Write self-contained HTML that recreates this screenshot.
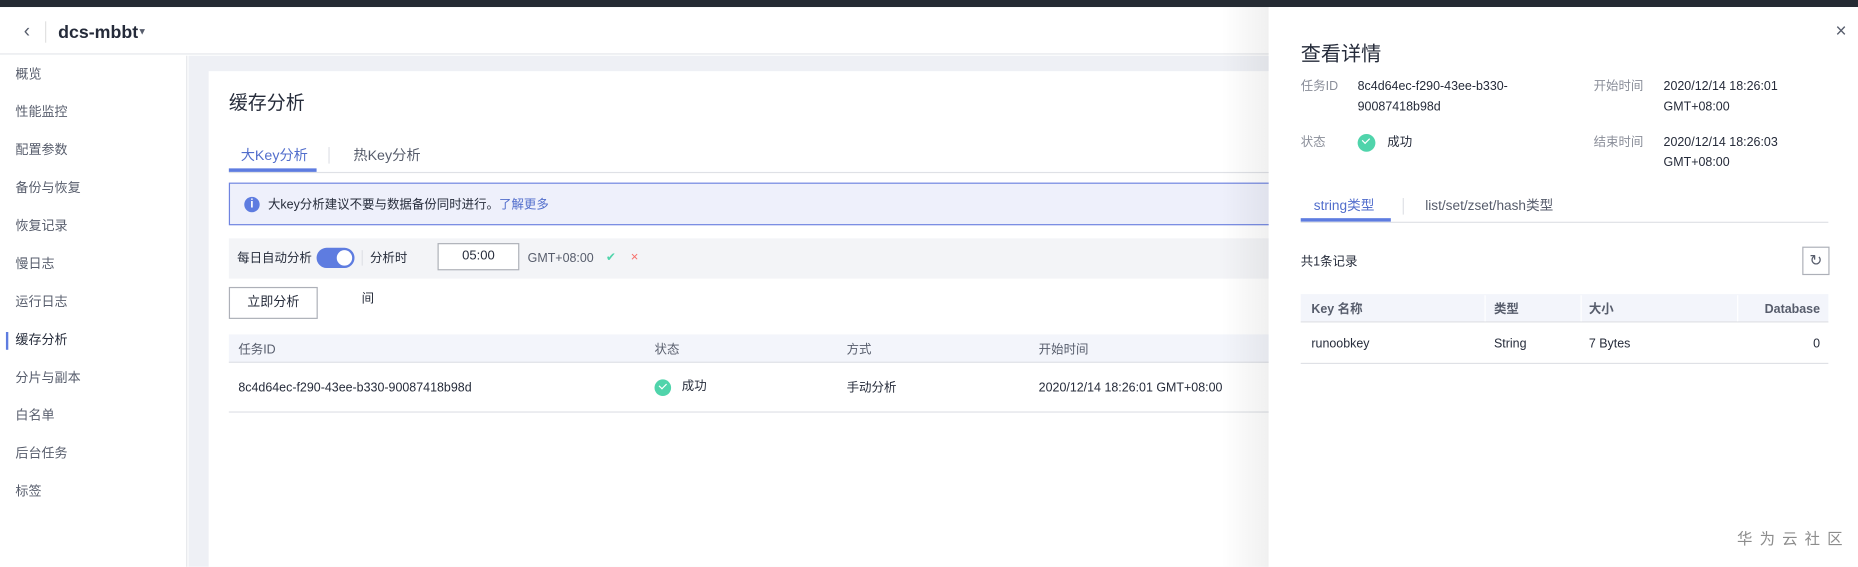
<!DOCTYPE html>
<html><head><meta charset="utf-8"><style>
*{box-sizing:border-box;margin:0;padding:0}
html,body{width:1858px;height:566px;overflow:hidden;background:#fff}
#w{position:absolute;left:0;top:0;width:1567px;height:478px;transform:scale(1.1857);transform-origin:0 0;font-family:"Liberation Sans","Noto Sans CJK SC",sans-serif;font-size:12px;color:#252b3a}
.a{position:absolute;white-space:nowrap;line-height:14px}
.side div{position:absolute;left:13px;font-size:11px;color:#575d6c;line-height:14px}
.chk{display:inline-block;width:14px;height:14px;border-radius:50%;background:#50d4ab;position:absolute}
.chk:after{content:"";position:absolute;left:4px;top:3px;width:5px;height:3px;border-left:1.5px solid #fff;border-bottom:1.5px solid #fff;transform:rotate(-45deg)}
</style></head><body><div id="w">
<div class="a" style="left:0;top:0;width:1567px;height:6px;background:#252b33"></div>
<div class="a" style="left:0;top:6px;width:1567px;height:40px;background:#fff;border-bottom:1px solid #e4e6ea"></div>
<div class="a" style="left:20px;top:18px;font-size:16px;line-height:18px;color:#575d6c">&#8249;</div>
<div class="a" style="left:38px;top:18px;width:1px;height:18px;background:#e0e0e0"></div>
<div class="a" style="left:49px;top:19px;font-size:15px;line-height:17px;font-weight:bold;color:#252b3a">dcs-mbbt</div>
<div class="a" style="left:116px;top:22px;font-size:8px;line-height:10px;color:#575d6c">&#9660;</div>
<div class="a" style="left:0;top:47px;width:158px;height:431px;background:#fff;border-right:1px solid #e4e6ea"></div>
<div class="a" style="left:159px;top:47px;width:1408px;height:431px;background:#eef0f5"></div>
<div class="side">
<div style="top:56px">概览</div><div style="top:88px">性能监控</div><div style="top:120px">配置参数</div><div style="top:152px">备份与恢复</div><div style="top:184px">恢复记录</div><div style="top:216px">慢日志</div><div style="top:248px">运行日志</div><div style="top:280px;color:#252b3a">缓存分析</div><div style="top:312px">分片与副本</div><div style="top:344px">白名单</div><div style="top:376px">后台任务</div><div style="top:408px">标签</div>
</div>
<div class="a" style="left:5px;top:280px;width:2px;height:15px;background:#5e7ce0"></div>
<div class="a" style="left:176px;top:60px;width:1000px;height:418px;background:#fff"></div>
<div class="a" style="left:193px;top:79px;font-size:16px;line-height:18px">缓存分析</div>
<div class="a" style="left:203px;top:124px;font-size:12px;color:#526ecc">大Key分析</div>
<div class="a" style="left:193px;top:142px;width:74px;height:3px;background:#5e7ce0"></div>
<div class="a" style="left:277px;top:124px;width:1px;height:14px;background:#dfe1e6"></div>
<div class="a" style="left:298px;top:124px;font-size:12px;color:#575d6c">热Key分析</div>
<div class="a" style="left:193px;top:145px;width:900px;height:1px;background:#dfe1e6"></div>
<div class="a" style="left:193px;top:154px;width:900px;height:36px;background:#eef0fb;border:1px solid #6f84e0"></div>
<div class="a" style="left:206px;top:166px;width:13px;height:13px;border-radius:50%;background:#5e7ce0;color:#fff;font-size:10px;font-weight:bold;text-align:center;line-height:13px">i</div>
<div class="a" style="left:226px;top:166px;font-size:10.5px;color:#252b3a">大key分析建议不要与数据备份同时进行。<span style="color:#526ecc">了解更多</span></div>
<div class="a" style="left:193px;top:201px;width:900px;height:34px;background:#f3f4f7"></div>
<div class="a" style="left:200px;top:211px;font-size:10.5px">每日自动分析</div>
<div class="a" style="left:267px;top:209px;width:32px;height:17px;border-radius:9px;background:#5e7ce0"><div style="position:absolute;right:2px;top:2px;width:13px;height:13px;border-radius:50%;background:#fff"></div></div>
<div class="a" style="left:305px;top:211px;width:1px;height:13px;background:#dfe1e6"></div>
<div class="a" style="left:312px;top:211px;font-size:10.5px">分析时</div>
<div class="a" style="left:369px;top:205px;width:69px;height:23px;background:#fff;border:1px solid #adb0b8;font-size:11px;text-align:center;line-height:21px">05:00</div>
<div class="a" style="left:445px;top:211px;font-size:10.5px;color:#575d6c">GMT+08:00</div>
<div class="a" style="left:511px;top:211px;font-size:10px;color:#50d4ab">&#10004;</div>
<div class="a" style="left:532px;top:210px;font-size:11px;color:#f66f6a">&#215;</div>
<div class="a" style="left:193px;top:242px;width:75px;height:27px;border:1px solid #adb0b8;font-size:11px;text-align:center;line-height:25px">立即分析</div>
<div class="a" style="left:305px;top:245px;font-size:10.5px">间</div>
<div class="a" style="left:193px;top:282px;width:900px;height:24px;background:#f3f5fb;border-bottom:1px solid #dfe1e6"></div>
<div class="a" style="left:201px;top:288px;font-size:10.5px;color:#575d6c">任务ID</div>
<div class="a" style="left:552px;top:288px;font-size:10.5px;color:#575d6c">状态</div>
<div class="a" style="left:714px;top:288px;font-size:10.5px;color:#575d6c">方式</div>
<div class="a" style="left:876px;top:288px;font-size:10.5px;color:#575d6c">开始时间</div>
<div class="a" style="left:201px;top:320px;font-size:10.5px">8c4d64ec-f290-43ee-b330-90087418b98d</div>
<span class="chk" style="left:552px;top:320px"></span>
<div class="a" style="left:575px;top:319px;font-size:10.5px">成功</div>
<div class="a" style="left:714px;top:320px;font-size:10.5px">手动分析</div>
<div class="a" style="left:876px;top:320px;font-size:10.5px">2020/12/14 18:26:01 GMT+08:00</div>
<div class="a" style="left:193px;top:347px;width:900px;height:1px;background:#dfe1e6"></div>
<div class="a" style="left:1030px;top:6px;width:40px;height:472px;background:linear-gradient(90deg,rgba(0,0,0,0),rgba(0,0,0,0.06))"></div>
<div class="a" style="left:1070px;top:6px;width:497px;height:472px;background:#fff"></div>
<div class="a" style="left:1548px;top:19px;font-size:16px;line-height:16px;color:#575d6c">&#215;</div>
<div class="a" style="left:1097px;top:36px;font-size:17px;line-height:20px">查看详情</div>
<div class="a" style="left:1097px;top:66px;font-size:10.5px;color:#8a8e99">任务ID</div>
<div class="a" style="left:1145px;top:65px;font-size:10.5px;line-height:17px">8c4d64ec-f290-43ee-b330-<br>90087418b98d</div>
<div class="a" style="left:1344px;top:66px;font-size:10.5px;color:#8a8e99">开始时间</div>
<div class="a" style="left:1403px;top:65px;font-size:10.5px;line-height:17px">2020/12/14 18:26:01<br>GMT+08:00</div>
<div class="a" style="left:1097px;top:113px;font-size:10.5px;color:#8a8e99">状态</div>
<span class="chk" style="left:1145px;top:113px;width:15px;height:15px"></span>
<div class="a" style="left:1170px;top:113px;font-size:10.5px">成功</div>
<div class="a" style="left:1344px;top:113px;font-size:10.5px;color:#8a8e99">结束时间</div>
<div class="a" style="left:1403px;top:112px;font-size:10.5px;line-height:17px">2020/12/14 18:26:03<br>GMT+08:00</div>
<div class="a" style="left:1108px;top:167px;font-size:11.5px;color:#526ecc">string类型</div>
<div class="a" style="left:1097px;top:184px;width:76px;height:3px;background:#5e7ce0"></div>
<div class="a" style="left:1183px;top:167px;width:1px;height:14px;background:#dfe1e6"></div>
<div class="a" style="left:1202px;top:167px;font-size:11.5px;color:#575d6c">list/set/zset/hash类型</div>
<div class="a" style="left:1097px;top:187px;width:445px;height:1px;background:#dfe1e6"></div>
<div class="a" style="left:1097px;top:214px;font-size:10.5px">共1条记录</div>
<div class="a" style="left:1520px;top:208px;width:23px;height:24px;border:1px solid #adb0b8;font-size:13px;text-align:center;line-height:22px;color:#575d6c">&#8635;</div>
<div class="a" style="left:1097px;top:248px;width:445px;height:24px;background:#f3f5fb;border-bottom:1px solid #dfe1e6"></div>
<div class="a" style="left:1252px;top:249px;width:1px;height:22px;background:#fff"></div>
<div class="a" style="left:1333px;top:249px;width:1px;height:22px;background:#fff"></div>
<div class="a" style="left:1465px;top:249px;width:1px;height:22px;background:#fff"></div>
<div class="a" style="left:1106px;top:254px;font-size:10.5px;font-weight:bold;color:#575d6c">Key 名称</div>
<div class="a" style="left:1260px;top:254px;font-size:10.5px;font-weight:bold;color:#575d6c">类型</div>
<div class="a" style="left:1340px;top:254px;font-size:10.5px;font-weight:bold;color:#575d6c">大小</div>
<div class="a" style="left:1470px;top:254px;width:65px;text-align:right;font-size:10.5px;font-weight:bold;color:#575d6c">Database</div>
<div class="a" style="left:1106px;top:283px;font-size:10.5px">runoobkey</div>
<div class="a" style="left:1260px;top:283px;font-size:10.5px">String</div>
<div class="a" style="left:1340px;top:283px;font-size:10.5px">7 Bytes</div>
<div class="a" style="left:1480px;top:283px;width:55px;text-align:right;font-size:10.5px">0</div>
<div class="a" style="left:1097px;top:306px;width:445px;height:1px;background:#dfe1e6"></div>
<div class="a" style="left:1465px;top:448px;font-size:13px;letter-spacing:6px;color:#8c8c8c">华为云社区</div>
</div></body></html>
